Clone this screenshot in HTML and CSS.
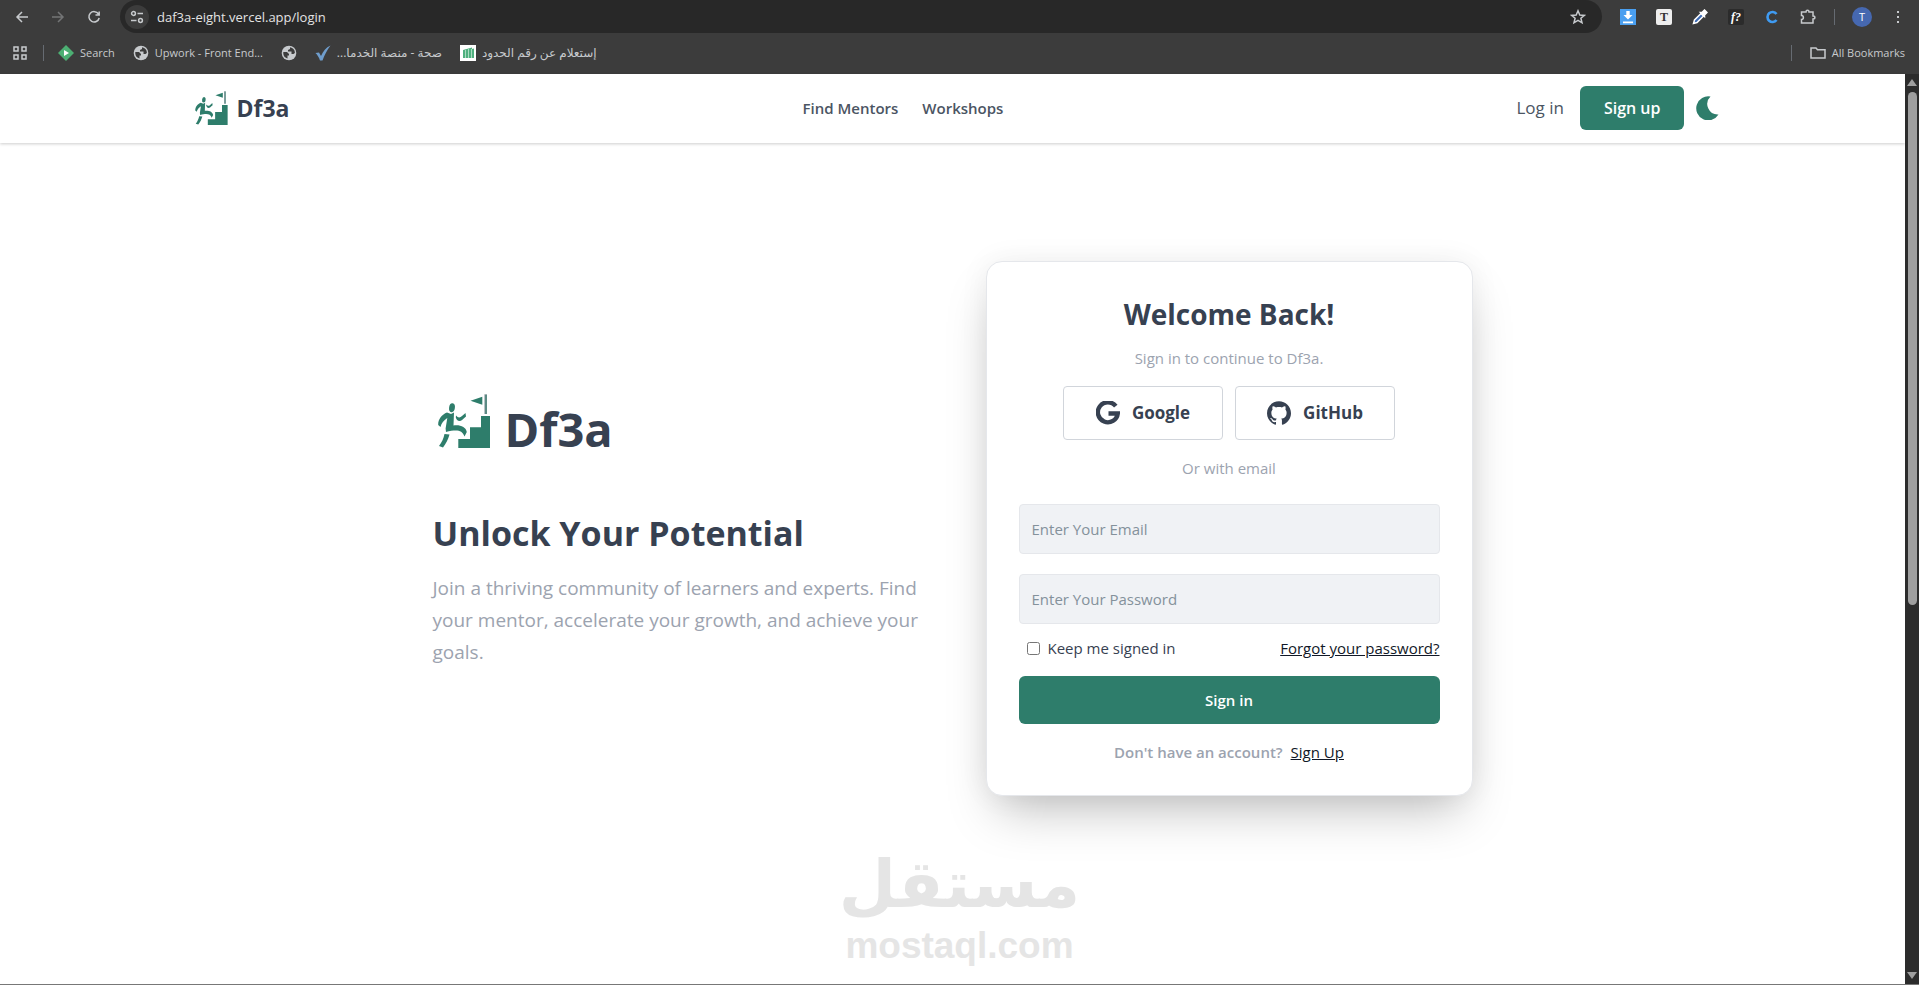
FILE: index.html
```html
<!DOCTYPE html>
<html lang="en">
<head>
    <meta charset="UTF-8">
    <meta name="viewport" content="width=device-width, initial-scale=1.0">
    <title>Df3a - Login</title>
    <link rel="stylesheet" href="styles.css">
</head>
<body>
    <!-- Shared shapes -->
    <svg class="sprite" aria-hidden="true">
        <symbol id="climber" viewBox="0 0 64 64">
            <ellipse cx="19" cy="18.700" rx="2.900" ry="4.500" transform="rotate(8 19 18.7)" fill="currentColor"/>
            <path d="M14 23.500 L18 25 L21 23.500 L20.500 36.500 C27 35.500 33 38 33.800 43 L31.500 47.500 C29 41 24 40.500 13 43 L12.600 39.500 L14.300 29 C10.500 31.500 8.500 34 7.500 38 L5.200 36 C5 30 9 25.500 14 23.500 Z" fill="currentColor"/>
            <path d="M23 26.500 C25 29 27 29 29 27 L32.500 24 L33 27.500 C30 30 28.500 32 26.500 32 C24.500 32 23.500 30.500 22.800 28.500 Z" fill="currentColor"/>
            <path d="M11.500 45 L16.500 45.500 C15 51 13 54.500 10 58.500 L6 57 C9 53 10.500 49.500 11.500 45 Z" fill="currentColor"/>
            <path d="M37.500 11.700 L49.300 7.700 V15.700 Z" fill="currentColor"/>
            <path d="M52.700 5.300 V25" stroke="#8b9a9f" stroke-width="2.600"/>
            <path d="M53 5.800 V25" stroke="currentColor" stroke-width="1"/>
            <path d="M25.300 50 H37 V38.300 H48 V27 H57 V59 H25.300 Z" fill="currentColor"/>
        </symbol>
        <symbol id="globe" viewBox="0 0 16 16">
            <circle cx="8" cy="8" r="7.300" fill="#c7cacd" stroke="none"/>
            <path d="M2.300 7 H6 L8 9 V10.500 H6.500 V13.500 A6 6 0 0 1 2.300 7 Z M9 2.200 V4 L7 5 V6.500 H10.500 V9 H12.500 L13.900 8 A6 6 0 0 0 9 2.200 Z" fill="#3c3c3c" stroke="none"/>
        </symbol>
    </svg>

    <div class="browser">
        <div class="toolbar">
            <div class="nav-buttons">
                <button type="button" aria-label="Back"><svg viewBox="0 0 16 16"><path d="M14 8 H3 M8 3 L3 8 L8 13"/></svg></button>
                <button type="button" class="dim" aria-label="Forward"><svg viewBox="0 0 16 16"><path d="M2 8 H13 M8 3 L13 8 L8 13"/></svg></button>
                <button type="button" aria-label="Reload"><svg viewBox="0 0 16 16"><path d="M12.500 5 A5.200 5.200 0 1 0 13.200 9 M13.200 2.500 V6 H9.500"/></svg></button>
            </div>
            <div class="omnibox">
                <span class="site-info"><svg viewBox="0 0 16 16"><path d="M8.500 4.500 H14 M2 11.500 H7.500"/><circle cx="4.500" cy="4.500" r="1.900"/><circle cx="11.500" cy="11.500" r="1.900"/></svg></span>
                <input class="url" type="text" aria-label="Address" value="daf3a-eight.vercel.app/login">
                <button type="button" aria-label="Bookmark"><svg viewBox="0 0 16 16"><path d="M8 1.800 L9.800 6 L14.300 6.400 L10.900 9.300 L12 13.800 L8 11.400 L4 13.800 L5.100 9.300 L1.700 6.400 L6.200 6 Z"/></svg></button>
            </div>
            <div class="extensions">
                <button type="button" aria-label="Downloader"><svg viewBox="0 0 16 16"><rect width="16" height="16" fill="#4a9ff0" stroke="none"/><path d="M6.300 2 H9.700 V6 H12.500 L8 10.500 L3.500 6 H6.300 Z M3 12.500 H13 V14.200 H3 Z" fill="#fff" stroke="none"/></svg></button>
                <button type="button" aria-label="Fonts"><span class="tile tile-light">T</span></button>
                <button type="button" aria-label="Color picker"><svg viewBox="0 0 16 16"><path d="M1.500 14.500 L2.500 11 L9 4.500 L11.500 7 L5 13.500 Z" fill="#3d6bb5" stroke="#fff"/><path d="M8.500 3.500 L10 3.500 L12.500 1 L15 3.500 L12.500 6 L12.500 7.500 Z" fill="#fff" stroke="#fff"/></svg></button>
                <button type="button" aria-label="Font finder"><span class="tile tile-dark">f?</span></button>
                <button type="button" aria-label="C extension"><svg viewBox="0 0 16 16"><path d="M12.500 5 A5 5 0 1 0 12.500 11" stroke="#3f9bf2" stroke-width="2.600"/></svg></button>
                <button type="button" aria-label="Extensions"><svg viewBox="0 0 16 16"><path d="M1.500 3 H6 C6 0.800 9 0.800 9 3 H13 V7 C15.500 7 15.500 10 13 10 V14 H1.500 V10.500 C4 10.500 4 6.500 1.500 6.500 Z"/></svg></button>
            </div>
            <span class="divider"></span>
            <span class="avatar">T</span>
            <button type="button" aria-label="Menu"><svg viewBox="0 0 16 16"><path d="M7 2 H9 V4 H7 Z M7 7 H9 V9 H7 Z M7 12 H9 V14 H7 Z" fill="#c7cacd" stroke="none"/></svg></button>
        </div>
        <div class="bookmarks">
            <svg viewBox="0 0 16 16"><path d="M2 2 H6 V6 H2 Z M10 2 H14 V6 H10 Z M2 10 H6 V14 H2 Z M10 10 H14 V14 H10 Z"/></svg>
            <span class="divider"></span>
            <a href="#"><svg viewBox="0 0 16 16"><path d="M8 0 L16 8 L8 16 L0 8 Z" fill="#4caf73" stroke="none"/><path d="M6 5 L11 8 L6 11 Z" fill="#fff" stroke="none"/></svg>Search</a>
            <a href="#"><svg><use href="#globe"/></svg>Upwork - Front End...</a>
            <a href="#" aria-label="Bookmark"><svg><use href="#globe"/></svg></a>
            <a href="#"><svg viewBox="0 0 16 16"><path d="M0.500 8 L4 7.500 L6 11 C8 6.500 11 2.500 15.500 0.500 C12 5 9.500 10 7.500 15.500 H5 C4 12.500 2.500 10 0.500 8 Z" fill="#6f9dcc" stroke="none"/></svg><span dir="rtl" lang="ar">صحة - منصة الخدما...</span></a>
            <a href="#"><svg viewBox="0 0 16 16"><rect width="16" height="16" fill="#fff" stroke="none"/><path d="M3 5 L12 2.500 V4 L14 3.500 V13 H3 Z" fill="#4fb07f" stroke="none"/><path d="M5.500 5 V13 M8.500 4 V13 M11.500 4 V13" stroke="#a9dcc0" stroke-width="1"/></svg><span dir="rtl" lang="ar">إستعلام عن رقم الحدود</span></a>
            <span class="divider push"></span>
            <a href="#"><svg viewBox="0 0 16 16"><path d="M1 13 V3 H6 L7.500 4.800 H15 V13 Z"/></svg>All Bookmarks</a>
        </div>
    </div>

    <div class="viewport">
        <div class="page">
            <header class="site-header">
                <div class="header-inner">
                    <a class="brand" href="#"><svg><use href="#climber"/></svg>Df3a</a>
                    <nav class="site-nav">
                        <a href="#">Find Mentors</a>
                        <a href="#">Workshops</a>
                    </nav>
                    <div class="account">
                        <a class="login-link" href="#">Log in</a>
                        <button class="signup" type="button">Sign up</button>
                        <button class="theme" type="button" aria-label="Dark mode"><svg viewBox="0 0 24 24"><path d="M14.500 0.500 A12 12 0 1 0 22.500 18.500 A10.500 10.500 0 0 1 14.500 0.500 Z" fill="currentColor"/></svg></button>
                    </div>
                </div>
            </header>

            <main class="login">
                <section class="intro">
                    <div class="brand brand-large"><svg><use href="#climber"/></svg>Df3a</div>
                    <h1>Unlock Your Potential</h1>
                    <p>Join a thriving community of learners and experts. Find your mentor, accelerate your growth, and achieve your goals.</p>
                </section>

                <section class="card">
                    <h2>Welcome Back!</h2>
                    <p class="muted">Sign in to continue to Df3a.</p>
                    <div class="providers">
                        <button type="button"><svg viewBox="0 0 24 24"><path d="M19.800 5.200 A10 10 0 1 0 21.800 12.500 H12.500" fill="none" stroke="currentColor" stroke-width="4.400"/></svg>Google</button>
                        <button type="button"><svg viewBox="0 0 24 24"><path fill="currentColor" d="M12 .297c-6.630 0-12 5.373-12 12 0 5.303 3.438 9.800 8.205 11.385.6.113.820-.258.820-.577 0-.285-.010-1.040-.015-2.040-3.338.724-4.042-1.610-4.042-1.610C4.422 18.070 3.633 17.700 3.633 17.700c-1.087-.744.084-.729.084-.729 1.205.084 1.838 1.236 1.838 1.236 1.070 1.835 2.809 1.305 3.495.998.108-.776.417-1.305.760-1.605-2.665-.3-5.466-1.332-5.466-5.930 0-1.310.465-2.380 1.235-3.220-.135-.303-.540-1.523.105-3.176 0 0 1.005-.322 3.300 1.230.960-.267 1.980-.399 3-.405 1.020.006 2.040.138 3 .405 2.280-1.552 3.285-1.230 3.285-1.230.645 1.653.240 2.873.120 3.176.765.840 1.230 1.910 1.230 3.220 0 4.610-2.805 5.625-5.475 5.920.420.360.810 1.096.810 2.220 0 1.606-.015 2.896-.015 3.286 0 .315.210.690.825.570C20.565 22.092 24 17.592 24 12.297c0-6.627-5.373-12-12-12"/></svg>GitHub</button>
                    </div>
                    <p class="muted">Or with email</p>
                    <form>
                        <input class="field" type="email" aria-label="Email" placeholder="Enter Your Email">
                        <input class="field" type="password" aria-label="Password" placeholder="Enter Your Password">
                        <div class="options">
                            <label for="keep"><input type="checkbox" id="keep" name="keep">Keep me signed in</label>
                            <a href="#">Forgot your password?</a>
                        </div>
                        <button class="submit" type="submit">Sign in</button>
                    </form>
                    <p class="register">Don't have an account? <a href="#">Sign Up</a></p>
                </section>
            </main>
        </div>

        <div class="scrollbar">
            <span class="arrow up"></span>
            <span class="thumb"></span>
            <span class="arrow down"></span>
        </div>
    </div>

    <div class="watermark">
        <span class="watermark-ar" lang="ar" dir="rtl">مستقل</span>
        <span class="watermark-en">mostaql.com</span>
    </div>
</body>
</html>
```
FILE: styles.css
```css
* {
    box-sizing: border-box;
}
body {
    margin: 0;
    min-height: 100vh;
    display: flex;
    flex-direction: column;
    position: relative;
    font-family: "Segoe UI", "Open Sans", "Noto Sans", "DejaVu Sans", sans-serif;
    font-size: 15px;
    line-height: 24px;
    color: #374151;
    background-color: #fff;
    border-bottom: 1px solid #777;
}
h1, h2, p {
    margin: 0;
}
a {
    color: inherit;
    text-decoration: none;
}
button {
    padding: 0;
    border: none;
    background: none;
    color: inherit;
    font: inherit;
    cursor: pointer;
}
svg {
    display: block;
    flex: none;
}
.sprite {
    position: absolute;
    width: 0;
    height: 0;
}

/* Browser bars */
.browser {
    height: 74px;
    background-color: #3c3c3c;
    color: #c7cacd;
    font-size: 11px;
    line-height: 16px;
}
.browser svg {
    width: 16px;
    height: 16px;
    fill: none;
    stroke: #c7cacd;
    stroke-width: 1.5;
}
.toolbar {
    display: flex;
    align-items: center;
    height: 33px;
    padding-right: 13px;
}
.nav-buttons {
    display: flex;
    gap: 20px;
    padding: 0 18px 0 14px;
}
.nav-buttons .dim {
    opacity: 0.4;
}
.omnibox {
    flex: 1;
    display: flex;
    align-items: center;
    height: 33px;
    padding: 0 16px 0 5px;
    border-radius: 17px;
    background-color: #282828;
}
.site-info {
    display: flex;
    align-items: center;
    justify-content: center;
    width: 24px;
    height: 24px;
    border-radius: 50%;
    background-color: #3c3c3c;
}
.url {
    flex: 1;
    padding: 0;
    margin-left: 8px;
    border: none;
    outline: none;
    background: none;
    color: #e3e3e3;
    font: inherit;
    font-size: 13px;
}
.extensions {
    display: flex;
    gap: 20px;
    padding: 0 18px;
}
.tile {
    display: block;
    width: 16px;
    height: 16px;
    border-radius: 2px;
    text-align: center;
    font-family: "Liberation Serif", serif;
    font-size: 12px;
    font-weight: bold;
}
.tile-light {
    background-color: #eee;
    color: #333;
}
.tile-dark {
    background-color: #2b2b2b;
    color: #fff;
    font-style: italic;
}
.divider {
    width: 1px;
    height: 16px;
    background-color: #666b72;
}
.avatar {
    width: 20px;
    margin: 0 18px 0 17px;
    border-radius: 50%;
    background-color: #4668b0;
    color: #fff;
    line-height: 20px;
    text-align: center;
}
.bookmarks {
    display: flex;
    align-items: center;
    gap: 18px;
    height: 40px;
    padding: 0 14px 0 12px;
}
.bookmarks a {
    display: flex;
    align-items: center;
    gap: 6px;
}
.bookmarks .divider {
    margin: 0 -4px 0 -3px;
}
.bookmarks [lang="ar"] {
    font-size: 12px;
}
.bookmarks .push {
    margin: 0 0 0 auto;
}

/* Page and scrollbar */
.viewport {
    flex: 1;
    display: flex;
}
.page {
    flex: 1;
}
.scrollbar {
    display: flex;
    flex-direction: column;
    align-items: center;
    width: 14px;
    padding: 5px 0;
    background-color: #2c2c2c;
}
.thumb {
    width: 9px;
    height: 57%;
    margin: 6px 0 auto;
    border-radius: 5px;
    background-color: #9f9f9f;
}
.arrow {
    border: 5px solid transparent;
}
.up {
    border-top: none;
    border-bottom: 7px solid #9f9f9f;
}
.down {
    border-bottom: none;
    border-top: 7px solid #9f9f9f;
}

/* Site header */
.site-header {
    padding: 12px 0 13px;
    box-shadow: 0 1px 3px rgba(0, 0, 0, 0.2);
}
.header-inner {
    display: flex;
    align-items: center;
    justify-content: space-between;
    max-width: 1536px;
    margin: 0 auto;
    padding-left: 7px;
}
.brand {
    display: flex;
    align-items: center;
    gap: 5px;
    font-size: 23px;
    line-height: 32px;
    font-weight: bold;
}
.brand svg {
    width: 40px;
    height: 40px;
    color: #2e7d6b;
}
.site-nav {
    display: flex;
    gap: 24px;
    color: #4b5563;
    font-weight: 600;
}
.account {
    display: flex;
    align-items: center;
    color: #4b5563;
    font-size: 17px;
}
.login-link {
    font-weight: 500;
}
.signup {
    height: 44px;
    margin: 0 12px 0 16px;
    padding: 0 24px;
    border-radius: 6px;
    background-color: #2e7d6b;
    color: #fff;
    font-size: 16px;
    font-weight: 600;
}
.theme {
    color: #2e7d6b;
}
.theme svg {
    width: 24px;
    height: 24px;
}

/* Login */
.login {
    display: grid;
    grid-template-columns: 1fr 1fr;
    gap: 66px;
    align-items: center;
    max-width: 1040px;
    margin: 0 auto;
    padding: 118px 0;
}
.brand-large {
    gap: 8px;
    padding-top: 8px;
    font-size: 47px;
    line-height: 64px;
}
.brand-large svg {
    width: 64px;
    height: 64px;
    margin-top: -16px;
}
.intro h1 {
    margin: 52px 0 19px;
    font-size: 34px;
    line-height: 40px;
}
.intro p {
    color: #9ca3af;
    font-size: 19px;
    line-height: 32px;
}
.card {
    padding: 34px 32px 31px;
    border: 1px solid #e5e7eb;
    border-radius: 16px;
    background-color: #fff;
    box-shadow: 0 25px 50px -12px rgba(0, 0, 0, 0.25), 0 0 30px rgba(0, 0, 0, 0.06);
    text-align: center;
}
.card h2 {
    margin-bottom: 14px;
    font-size: 28px;
    line-height: 36px;
}
.muted {
    color: #9ca3af;
}
.providers {
    display: flex;
    justify-content: center;
    gap: 12px;
    margin: 16px 0;
}
.providers button {
    display: flex;
    align-items: center;
    justify-content: center;
    gap: 12px;
    width: 160px;
    height: 54px;
    border: 1px solid #d1d5db;
    border-radius: 4px;
    font-size: 17px;
    font-weight: bold;
}
.providers svg {
    width: 24px;
    height: 24px;
}
.card form {
    margin: 24px 0 16px;
}
.field {
    display: block;
    width: 100%;
    height: 50px;
    margin-bottom: 20px;
    padding: 0 12px;
    border: 1px solid #e5e7eb;
    border-radius: 4px;
    background-color: #f0f2f5;
    color: inherit;
    font: inherit;
}
.field::placeholder {
    color: #84919b;
    opacity: 1;
}
.options {
    display: flex;
    justify-content: space-between;
    margin: -8px 0 16px;
}
.options label {
    display: flex;
    align-items: center;
}
.options input {
    margin: 0 8px;
}
.card a {
    color: #111827;
    text-decoration: underline;
}
.submit {
    width: 100%;
    height: 48px;
    border-radius: 6px;
    background-color: #2e7d6b;
    color: #fff;
    font-weight: 600;
}
.register {
    color: #9ca3af;
    font-weight: 600;
}
.register a {
    margin-left: 4px;
    font-weight: normal;
}

/* Watermark over the page */
.watermark {
    position: absolute;
    left: 0;
    right: 0;
    bottom: 16px;
    display: flex;
    flex-direction: column;
    align-items: center;
    color: #e5e5e5;
    font-weight: bold;
    pointer-events: none;
}
.watermark-ar {
    font-family: "DejaVu Sans", sans-serif;
    font-size: 66px;
    line-height: 78px;
}
.watermark-en {
    font-family: "Liberation Sans", Arial, sans-serif;
    font-size: 37px;
    line-height: 44px;
}
```
